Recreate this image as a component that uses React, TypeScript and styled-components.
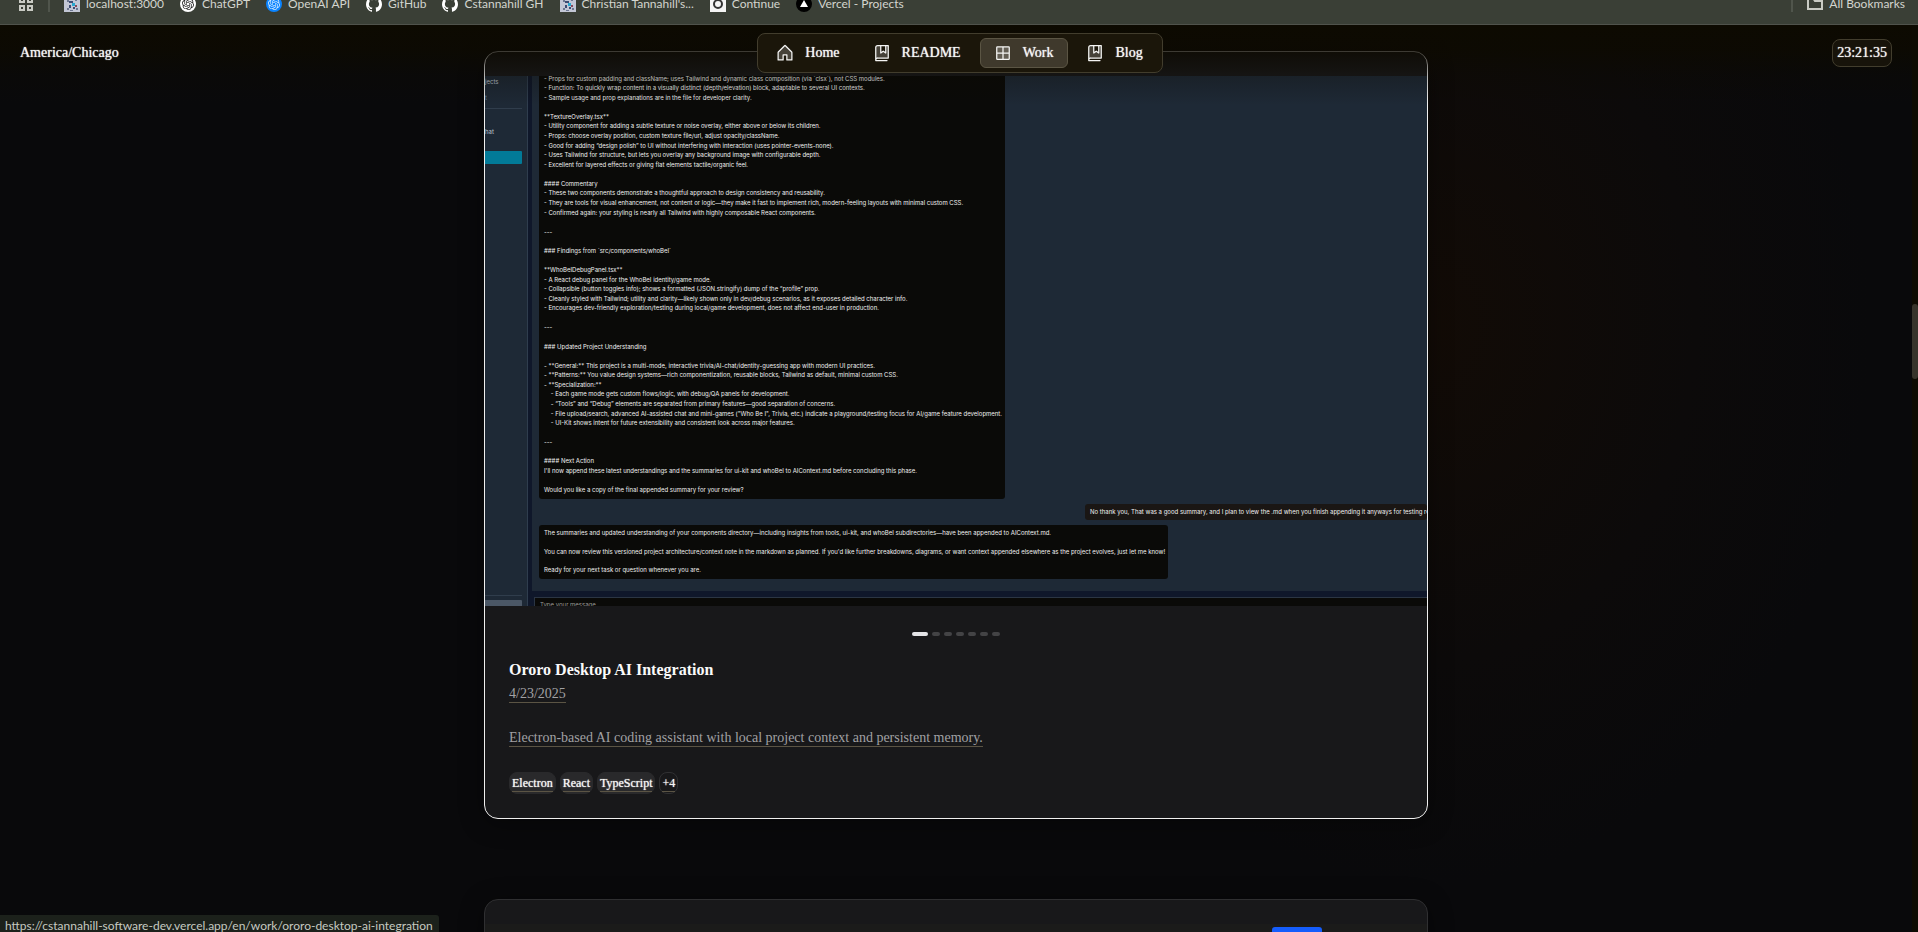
import React from "react";
import styled, { createGlobalStyle } from "styled-components";
import {
  PiBookBookmarkDuotone,
  PiGridFourDuotone,
  PiHouseDuotone,
} from "react-icons/pi";
import { SiGithub, SiOpenai } from "react-icons/si";

const serif = `"Liberation Serif", "Times New Roman", serif`;
const system = `Lato, "Segoe UI", sans-serif`;
const sans = `Inter, Arial, sans-serif`;

const GlobalStyle = createGlobalStyle`
  *, *::before, *::after { box-sizing: border-box; }
  html, body, #root { height: 100%; }
  body {
    margin: 0;
    background: #09090b;
    color: #f5f5f4;
    font-family: ${serif};
    font-size: 14px;
    overflow: hidden;
  }
  a { color: inherit; text-decoration: none; }
  h2, p, ul { margin: 0; padding: 0; }
  ul { list-style: none; }
`;

const Shell = styled.div`
  display: flex;
  flex-direction: column;
  height: 100%;
  overflow: hidden;
`;

/* Browser bookmarks bar */

const BookmarkBar = styled.nav`
  flex: none;
  display: flex;
  align-items: flex-end;
  justify-content: space-between;
  height: 25px;
  padding: 0 13px 12px 18px;
  overflow: hidden;
  background: #3a3f36;
  border-bottom: 1px solid #50534c;
  color: #d3d5ce;
  font: 12px/16px ${system};
`;

const BookmarkGroup = styled.div`
  display: flex;
  align-items: center;
  gap: 16px;
  height: 16px;
`;

const Bookmark = styled.a`
  display: flex;
  align-items: center;
  gap: 6px;
  height: 16px;
  white-space: nowrap;
`;

const Divider = styled.span`
  width: 2px;
  height: 16px;
  margin: 0 -2px;
  background: #50554c;
`;

const Favicon = styled.span<{ $bg: string; $fg: string; $round?: boolean }>`
  display: grid;
  place-items: center;
  width: 16px;
  height: 16px;
  border-radius: ${(p) => (p.$round ? "50%" : "0")};
  background: ${(p) => p.$bg};
  color: ${(p) => p.$fg};
`;

/* Page */

const Viewport = styled.div`
  flex: 1;
  min-height: 0;
  display: grid;
  grid-template-columns: minmax(0, 1fr) 6px;
`;

const Page = styled.div`
  position: relative;
  min-height: 0;
  overflow: hidden;
  background:
    radial-gradient(ellipse 440px 560px at 1430px 300px, #120b06 0%, #0c0a0a 60%, transparent 100%),
    #09090b;
`;

const ScrollTrack = styled.div`
  padding-top: 279px;
  background: #0d0b02;
`;

const ScrollThumb = styled.div`
  height: 75px;
  border-radius: 3px;
  background: #37342b;
`;

const Header = styled.header`
  position: absolute;
  inset: 0 0 auto;
  display: grid;
  grid-template-columns: 1fr auto 1fr;
  align-items: start;
  height: 80px;
  padding: 8px 20px;
  text-shadow: 0 0 1px #f5f5f4;
`;

const Fade = styled.div`
  position: absolute;
  inset: 0 0 auto;
  height: 80px;
  background: linear-gradient(#0d0a01 0, #0d0a01cc 26px, #0d0a0144 50px, #0d0a0100);
`;

const Zone = styled.span`
  padding-top: 12px;
  line-height: 16px;
`;

const Clock = styled.time`
  justify-self: end;
  margin-top: 6px;
  padding: 5px 4px;
  border: 1px solid #423d2d;
  border-radius: 8px;
  background: #17130a;
  line-height: 16px;
`;

const NavBar = styled.nav`
  display: flex;
  gap: 4px;
  margin-left: 8px;
  padding: 4px;
  border: 1px solid #423d2d;
  border-radius: 8px;
  background: #1b160a;
`;

const NavLink = styled.a<{ $active?: boolean }>`
  display: flex;
  align-items: center;
  gap: 10px;
  height: 30px;
  padding: 0 14px 0 12px;
  border: 1px solid ${(p) => (p.$active ? "#5b5544" : "transparent")};
  border-radius: 6px;
  background: ${(p) => (p.$active ? "#3f392c" : "transparent")};
  line-height: 16px;
  svg { width: 20px; height: 20px; }
`;

const Feed = styled.main`
  display: flex;
  flex-direction: column;
  gap: 80px;
  max-width: 944px;
  margin: 0 auto;
  padding-top: 26px;
`;

const Card = styled.article<{ $highlight?: boolean }>`
  padding-top: 24px;
  border: 1px solid ${(p) => (p.$highlight ? "#f0f0f0" : "#2f2f31")};
  border-radius: 14px;
  background: #18181a;
  box-shadow: 0 4px 24px #00000066;
  overflow: hidden;
`;

/* Chat application preview */

const Preview = styled.div`
  display: grid;
  grid-template-columns: 43px minmax(0, 1fr);
  column-gap: 4px;
  aspect-ratio: 16 / 9;
  overflow: hidden;
  background: #0f172a;
  color: #f1f1f1;
  font: 6px/8px ${sans};
`;

const SideBar = styled.div`
  display: flex;
  flex-direction: column;
  align-items: flex-start;
  padding-right: 5px;
  border-right: 1px solid #2f3d4e;
  background: #1e2936;
  color: #b8c0ca;
`;

const SideText = styled.span<{ $top: number; $dim?: boolean }>`
  margin-top: ${(p) => p.$top}px;
  color: ${(p) => (p.$dim ? "#5f7d9c" : "inherit")};
`;

const SideRule = styled.span<{ $top: number }>`
  width: 100%;
  height: 1px;
  margin-top: ${(p) => p.$top}px;
  background: #303d4c;
`;

const SideActive = styled.span`
  width: 100%;
  height: 13px;
  margin-top: 15px;
  border-radius: 0 1px 1px 0;
  background: #027a98;
`;

const SideButton = styled.span`
  width: 100%;
  height: 6px;
  margin-top: 4px;
  border-radius: 0 1px 0 0;
  background: #4b5766;
`;

const SideBottom = styled.div`
  width: 100%;
  margin-top: auto;
  display: flex;
  flex-direction: column;
`;

const ChatColumn = styled.div`
  display: flex;
  flex-direction: column;
  min-width: 0;
  min-height: 0;
`;

const Messages = styled.div`
  flex: 1;
  min-height: 0;
  display: flex;
  flex-direction: column;
  justify-content: flex-end;
  gap: 5px;
  padding: 0 0 12px 7px;
  overflow: hidden;
  background: #1e2936;
`;

const Bubble = styled.div<{ $rows: number }>`
  flex: none;
  align-self: flex-start;
  display: grid;
  grid-auto-rows: 1fr;
  align-items: center;
  height: ${(p) => p.$rows}px;
  padding: 4px 3px 4px 5px;
  border-radius: 3px;
  background: #0a0a08;
  white-space: pre;
`;

const UserBubble = styled(Bubble)`
  align-self: stretch;
  margin-left: 546px;
  padding: 4px 5px;
  background: #1a1614;
  overflow: hidden;
`;

const Composer = styled.div`
  flex: none;
  height: 9px;
  margin: 6px 0 0 2px;
  padding: 3px 5px 0;
  border: 1px solid #2b3543;
  border-width: 1px 0 0 1px;
  background: #0a0a08;
  color: #9a9a96;
  overflow: hidden;
`;

/* Card details */

const Dots = styled.div`
  display: flex;
  justify-content: center;
  gap: 4px;
  padding: 26px 0 24px;
`;

const Dot = styled.button<{ $on?: boolean }>`
  width: ${(p) => (p.$on ? 16 : 8)}px;
  height: 4px;
  padding: 0;
  border: 0;
  border-radius: 2px;
  background: ${(p) => (p.$on ? "#e4e4e7" : "#434345")};
`;

const Details = styled.div`
  display: flex;
  flex-direction: column;
  align-items: flex-start;
  padding: 0 24px 24px;
`;

const Title = styled.h2`
  font-size: 16px;
  line-height: 20px;
  color: #fafafa;
`;

const Muted = styled.p<{ $gap: number }>`
  margin-top: ${(p) => p.$gap}px;
  border-bottom: 1px solid #5b5444;
  color: #a1a1a4;
  line-height: 17px;
`;

const Tags = styled.ul`
  display: flex;
  gap: 4px;
  margin-top: 25px;
`;

const Tag = styled.li<{ $outline?: boolean }>`
  height: 22px;
  padding: 2px 2px 0;
  border: 1px solid ${(p) => (p.$outline ? "#303032" : "#29292b")};
  border-radius: 8px;
  background: ${(p) => (p.$outline ? "transparent" : "#29292b")};
  font-size: 12px;
  line-height: 16px;
  text-shadow: 0 0 1px #f5f5f4;
`;

const TagLink = styled.a`
  display: block;
  border-bottom: 1px solid #5b5444;
`;

const NextPreview = styled.div`
  display: flex;
  justify-content: flex-end;
  height: 300px;
  padding: 3px 105px;
  background: #1b1b1a;
`;

const BlueButton = styled.span`
  width: 50px;
  height: 20px;
  border-radius: 3px;
  background: #155dfc;
`;

const StatusUrl = styled.div`
  position: absolute;
  left: 0;
  bottom: 0;
  height: 17px;
  padding: 3px 6px 0 5px;
  border-radius: 0 3px 0 0;
  background: #1c211b;
  color: #c6cac0;
  font: 12px/16px ${system};
  white-space: nowrap;
  overflow: hidden;
`;

const PixelArt = () => (
  <svg width="16" height="16" viewBox="0 0 16 16" aria-hidden="true">
    <rect width="16" height="16" fill="#c3c7d6" />
    <path d="M3 3h2v3H3zM11 3h2v2h-2zM3 12h2v2H3zM12 12h2v2h-2zM6 14h3v1H6z" fill="#6d7791" />
    <path d="M5 5h4v2H5zM5 9h2v3H5zM9 11h2v2H9z" fill="#3d4b73" />
    <path d="M8 7h3v3H8z" fill="#2aa7cf" />
    <path d="M11 9h2v2h-2z" fill="#8a4a5c" />
  </svg>
);

const AppsIcon = () => (
  <svg width="16" height="16" viewBox="0 0 16 16" fill="none" stroke="#c9cbc4" strokeWidth="2" aria-hidden="true">
    <path d="M2 2h4v4H2zM10 2h4v4h-4zM2 10h4v4H2zM10 10h4v4h-4z" />
  </svg>
);

const FolderIcon = () => (
  <svg width="16" height="16" viewBox="0 0 16 16" fill="none" stroke="#c9cbc4" strokeWidth="2" aria-hidden="true">
    <path d="M1 1v12q0 0 1 0h13V5H8L6 2z" />
  </svg>
);

const TriangleIcon = () => (
  <svg width="8" height="8" viewBox="0 0 8 8" aria-hidden="true">
    <path d="M4 0l4 7H0z" fill="#fff" />
  </svg>
);

const ContinueIcon = () => (
  <svg width="12" height="12" viewBox="0 0 12 12" fill="none" aria-hidden="true">
    <circle cx="6" cy="6" r="4" stroke="#333" strokeWidth="2" />
  </svg>
);

const bookmarks: { label: string; icon: React.ReactNode }[] = [
  { label: "localhost:3000", icon: <PixelArt /> },
  { label: "ChatGPT", icon: <Favicon $bg="#fff" $fg="#222" $round><SiOpenai size={12} /></Favicon> },
  { label: "OpenAI API", icon: <Favicon $bg="#0a84ff" $fg="#d8ecff" $round><SiOpenai size={12} /></Favicon> },
  { label: "GitHub", icon: <SiGithub size={16} color="#fff" /> },
  { label: "Cstannahill GH", icon: <SiGithub size={16} color="#fff" /> },
  { label: "Christian Tannahill's...", icon: <PixelArt /> },
  { label: "Continue", icon: <Favicon $bg="#f4f4f4" $fg="#333"><ContinueIcon /></Favicon> },
  { label: "Vercel - Projects", icon: <Favicon $bg="#000" $fg="#fff" $round><TriangleIcon /></Favicon> },
];

const summary = [
  "- Props for custom padding and className; uses Tailwind and dynamic class composition (via `clsx`), not CSS modules.",
  "- Function: To quickly wrap content in a visually distinct (depth/elevation) block, adaptable to several UI contexts.",
  "- Sample usage and prop explanations are in the file for developer clarity.",
  "",
  "**TextureOverlay.tsx**",
  "- Utility component for adding a subtle texture or noise overlay, either above or below its children.",
  "- Props: choose overlay position, custom texture file/url, adjust opacity/className.",
  "- Good for adding “design polish” to UI without interfering with interaction (uses pointer-events-none).",
  "- Uses Tailwind for structure, but lets you overlay any background image with configurable depth.",
  "- Excellent for layered effects or giving flat elements tactile/organic feel.",
  "",
  "#### Commentary",
  "- These two components demonstrate a thoughtful approach to design consistency and reusability.",
  "- They are tools for visual enhancement, not content or logic—they make it fast to implement rich, modern-feeling layouts with minimal custom CSS.",
  "- Confirmed again: your styling is nearly all Tailwind with highly composable React components.",
  "",
  "---",
  "",
  "### Findings from `src/components/whoBeI`",
  "",
  "**WhoBeIDebugPanel.tsx**",
  "- A React debug panel for the WhoBeI identity/game mode.",
  "- Collapsible (button toggles info); shows a formatted (JSON.stringify) dump of the “profile” prop.",
  "- Cleanly styled with Tailwind; utility and clarity—likely shown only in dev/debug scenarios, as it exposes detailed character info.",
  "- Encourages dev-friendly exploration/testing during local/game development, does not affect end-user in production.",
  "",
  "---",
  "",
  "### Updated Project Understanding",
  "",
  "- **General:** This project is a multi-mode, interactive trivia/AI-chat/identity-guessing app with modern UI practices.",
  "- **Patterns:** You value design systems—rich componentization, reusable blocks, Tailwind as default, minimal custom CSS.",
  "- **Specialization:**",
  "    - Each game mode gets custom flows/logic, with debug/QA panels for development.",
  "    - “Tools” and “Debug” elements are separated from primary features—good separation of concerns.",
  "    - File upload/search, advanced AI-assisted chat and mini-games (\"Who Be I\", Trivia, etc.) indicate a playground/testing focus for AI/game feature development.",
  "    - UI-Kit shows intent for future extensibility and consistent look across major features.",
  "",
  "---",
  "",
  "#### Next Action",
  "I'll now append these latest understandings and the summaries for ui-kit and whoBeI to AIContext.md before concluding this phase.",
  "",
  "Would you like a copy of the final appended summary for your review?",
];

const reply = [
  "The summaries and updated understanding of your components directory—including insights from tools, ui-kit, and whoBeI subdirectories—have been appended to AIContext.md.",
  "",
  "You can now review this versioned project architecture/context note in the markdown as planned. If you'd like further breakdowns, diagrams, or want context appended elsewhere as the project evolves, just let me know!",
  "",
  "Ready for your next task or question whenever you are.",
];

const navItems = [
  { label: "Home", Icon: PiHouseDuotone },
  { label: "README", Icon: PiBookBookmarkDuotone },
  { label: "Work", Icon: PiGridFourDuotone, active: true },
  { label: "Blog", Icon: PiBookBookmarkDuotone },
];

const slides = [0, 1, 2, 3, 4, 5, 6];

const lines = (rows: string[]) => rows.map((row, i) => <span key={i}>{row || " "}</span>);

export default function App() {
  return (
    <Shell>
      <GlobalStyle />
      <BookmarkBar aria-label="Bookmarks">
        <BookmarkGroup>
          <AppsIcon />
          <Divider />
          {bookmarks.map((b) => (
            <Bookmark key={b.label} href="#">
              {b.icon}
              {b.label}
            </Bookmark>
          ))}
        </BookmarkGroup>
        <BookmarkGroup>
          <Divider />
          <Bookmark href="#">
            <FolderIcon />
            All Bookmarks
          </Bookmark>
        </BookmarkGroup>
      </BookmarkBar>

      <Viewport>
        <Page>
          <Feed>
            <Card $highlight>
              <Preview>
                <SideBar>
                  <SideText $top={2}>jects</SideText>
                  <SideText $top={8} $dim>t</SideText>
                  <SideRule $top={6} />
                  <SideText $top={19}>hat</SideText>
                  <SideActive />
                  <SideBottom>
                    <SideRule $top={0} />
                    <SideButton />
                  </SideBottom>
                </SideBar>
                <ChatColumn>
                  <Messages>
                    <Bubble $rows={429}>{lines(summary)}</Bubble>
                    <UserBubble $rows={16}>
                      <span>No thank you, That was a good summary, and I plan to view the .md when you finish appending it anyways for testing reasons.</span>
                    </UserBubble>
                    <Bubble $rows={54}>{lines(reply)}</Bubble>
                  </Messages>
                  <Composer>Type your message...</Composer>
                </ChatColumn>
              </Preview>
              <Dots>
                {slides.map((n) => (
                  <Dot key={n} $on={n === 0} type="button" aria-label={`Slide ${n + 1}`} />
                ))}
              </Dots>
              <Details>
                <Title>Ororo Desktop AI Integration</Title>
                <Muted $gap={5}>4/23/2025</Muted>
                <Muted $gap={26}>
                  Electron-based AI coding assistant with local project context and persistent memory.
                </Muted>
                <Tags>
                  {["Electron", "React", "TypeScript"].map((t) => (
                    <Tag key={t}><TagLink href="#">{t}</TagLink></Tag>
                  ))}
                  <Tag $outline><TagLink href="#">+4</TagLink></Tag>
                </Tags>
              </Details>
            </Card>
            <Card>
              <NextPreview>
                <BlueButton />
              </NextPreview>
            </Card>
          </Feed>

          <Fade />
          <Header>
            <Zone>America/Chicago</Zone>
            <NavBar aria-label="Main">
              {navItems.map(({ label, Icon, active }) => (
                <NavLink key={label} href="#" $active={active}>
                  <Icon />
                  {label}
                </NavLink>
              ))}
            </NavBar>
            <Clock>23:21:35</Clock>
          </Header>
          <StatusUrl>https://cstannahill-software-dev.vercel.app/en/work/ororo-desktop-ai-integration</StatusUrl>
        </Page>
        <ScrollTrack>
          <ScrollThumb />
        </ScrollTrack>
      </Viewport>
    </Shell>
  );
}
